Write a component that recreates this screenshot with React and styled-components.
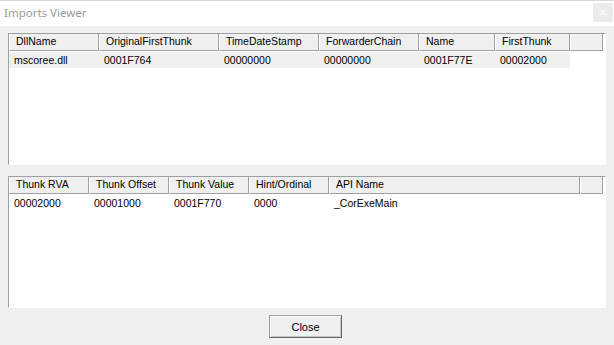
import React from 'react';
import styled, { createGlobalStyle } from 'styled-components';

const GlobalStyle = createGlobalStyle`
  html, body {
    margin: 0;
    padding: 0;
    background: #f0f0f0;
  }
`;

const Window = styled.div`
  width: 614px;
  height: 345px;
  display: flex;
  flex-direction: column;
  background: #f0f0f0;
  font-family: "Liberation Sans", Arial, sans-serif;
  font-size: 10.5px;
  color: #000;
  overflow: hidden;
`;

const TitleBar = styled.div`
  height: 25px;
  flex: none;
  display: flex;
  align-items: center;
  justify-content: space-between;
  background: #fff;
  border-top: 1px solid #d6d6d6;
  padding-left: 4px;
`;

const Title = styled.span`
  font-family: "Noto Sans", "Open Sans", sans-serif;
  font-size: 11.5px;
  color: #9a9a9a;
  margin-top: -2px;
`;

const CloseX = styled.div`
  width: 20px;
  height: 19px;
  margin-right: 1px;
  margin-bottom: 3px;
  display: flex;
  align-items: center;
  justify-content: center;
  background: #ebebeb;
  color: #fff;
  font-family: "DejaVu Sans", sans-serif;
  font-size: 10px;
`;

const Body = styled.div`
  flex: 1;
  display: flex;
  flex-direction: column;
  padding: 7px 8px 8px 8px;
  gap: 11px;
`;

const ListView = styled.div`
  height: ${p => p.$height}px;
  flex: none;
  box-sizing: border-box;
  background: #fff;
  border-top: 1px solid #a0a0a0;
  border-left: 1px solid #a0a0a0;
  border-right: 1px solid #fff;
  border-bottom: 1px solid #fff;
  padding-right: 2px;
  display: flex;
  flex-direction: column;
`;

const HeaderRow = styled.div`
  display: flex;
  height: 17px;
  flex: none;
`;

const HeaderCell = styled.div`
  box-sizing: border-box;
  width: ${p => (p.$width ? `${p.$width}px` : 'auto')};
  flex: ${p => (p.$width ? 'none' : '1')};
  height: 17px;
  line-height: 15px;
  padding-left: 6px;
  background: #f0f0f0;
  border-left: 1px solid #fff;
  border-right: 1px solid #a0a0a0;
  border-bottom: 1px solid #a0a0a0;
  white-space: nowrap;
  overflow: hidden;
`;

const DataRow = styled.div`
  display: flex;
  height: 16px;
  margin-top: 1px;
  align-self: flex-start;
  background: ${p => (p.$selected ? '#f0f0f0' : 'transparent')};
`;

const DataCell = styled.div`
  box-sizing: border-box;
  width: ${p => p.$width}px;
  flex: none;
  line-height: 16px;
  padding-left: 5px;
  white-space: nowrap;
  overflow: hidden;
`;

const Footer = styled.div`
  display: flex;
  justify-content: center;
  margin-top: -4px;
  padding-right: 3px;
`;

const Button = styled.button`
  width: 73px;
  height: 23px;
  box-sizing: border-box;
  background: #f0f0f0;
  border: 1px solid;
  border-color: #a0a0a0 #696969 #696969 #a0a0a0;
  box-shadow: inset 1px 1px #fff, inset -1px -1px #c8c8c8;
  font-family: "Liberation Sans", Arial, sans-serif;
  font-size: 11px;
  color: #000;
  padding: 0;
`;

const importColumns = [
  { title: 'DllName', width: 90 },
  { title: 'OriginalFirstThunk', width: 120 },
  { title: 'TimeDateStamp', width: 100 },
  { title: 'ForwarderChain', width: 100 },
  { title: 'Name', width: 76 },
  { title: 'FirstThunk', width: 75 },
];

const importRows = [
  ['mscoree.dll', '0001F764', '00000000', '00000000', '0001F77E', '00002000'],
];

const thunkColumns = [
  { title: 'Thunk RVA', width: 80 },
  { title: 'Thunk Offset', width: 80 },
  { title: 'Thunk Value', width: 80 },
  { title: 'Hint/Ordinal', width: 80 },
  { title: 'API Name', width: 251 },
];

const thunkRows = [
  ['00002000', '00001000', '0001F770', '0000', '_CorExeMain'],
];

const Table = ({ columns, rows, height, selectFirst }) => (
  <ListView $height={height}>
    <HeaderRow>
      {columns.map(col => (
        <HeaderCell key={col.title} $width={col.width}>{col.title}</HeaderCell>
      ))}
      <HeaderCell />
    </HeaderRow>
    {rows.map((row, i) => (
      <DataRow key={i} $selected={selectFirst && i === 0}>
        {row.map((value, j) => (
          <DataCell key={j} $width={columns[j].width}>{value}</DataCell>
        ))}
      </DataRow>
    ))}
  </ListView>
);

const App = () => (
  <Window>
    <GlobalStyle />
    <TitleBar>
      <Title>Imports Viewer</Title>
      <CloseX>✕</CloseX>
    </TitleBar>
    <Body>
      <Table columns={importColumns} rows={importRows} height={132} selectFirst />
      <Table columns={thunkColumns} rows={thunkRows} height={132} />
      <Footer>
        <Button>Close</Button>
      </Footer>
    </Body>
  </Window>
);

export default App;
